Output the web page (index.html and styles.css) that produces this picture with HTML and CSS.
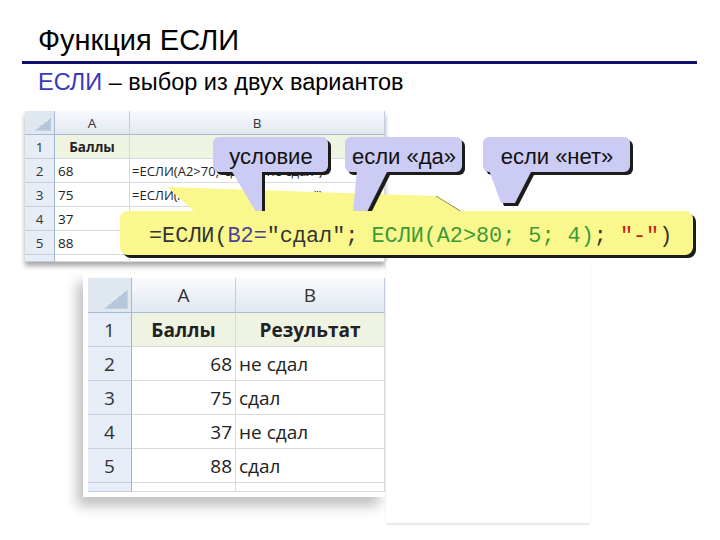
FILE: index.html
```html
<!DOCTYPE html>
<html lang="ru">
<head>
<meta charset="utf-8">
<title>Функция ЕСЛИ</title>
<link rel="stylesheet" href="styles.css">
</head>
<body>
<header class="head">
  <h1 class="title">Функция ЕСЛИ</h1>
  <div class="rule"></div>
  <p class="subtitle"><span class="kw">ЕСЛИ</span> – выбор из двух вариантов</p>
</header>
<main class="stage">
  <div class="sheet sheet-small">
    <div class="corner"></div><div class="colhead">A</div><div class="colhead">B</div>
    <div class="rownum">1</div><div class="cell hdr center">Баллы</div><div class="cell hdr"></div>
    <div class="rownum">2</div><div class="cell">68</div><div class="cell formula">=ЕСЛИ(A2&gt;70;"сдал";"не сдал")</div>
    <div class="rownum">3</div><div class="cell">75</div><div class="cell formula">=ЕСЛИ(A3&gt;70;"сдал";"не сдал")</div>
    <div class="rownum">4</div><div class="cell">37</div><div class="cell formula"></div>
    <div class="rownum">5</div><div class="cell">88</div><div class="cell formula"></div>
    <div class="rownum"></div><div class="cell"></div><div class="cell"></div>
  </div>
  <div class="frame">
    <div class="sheet sheet-big">
      <div class="corner"></div><div class="colhead">A</div><div class="colhead">B</div>
      <div class="rownum">1</div><div class="cell hdr center">Баллы</div><div class="cell hdr center">Результат</div>
      <div class="rownum">2</div><div class="cell num">68</div><div class="cell">не сдал</div>
      <div class="rownum">3</div><div class="cell num">75</div><div class="cell">сдал</div>
      <div class="rownum">4</div><div class="cell num">37</div><div class="cell">не сдал</div>
      <div class="rownum">5</div><div class="cell num">88</div><div class="cell">сдал</div>
      <div class="rownum"></div><div class="cell"></div><div class="cell"></div>
    </div>
  </div>
  <div class="cover"></div>
  <svg class="callouts" width="720" height="440" viewBox="0 100 720 440">
    <polygon class="yel" points="167,187 436,196 462,212 195,212"/>
    <line x1="436" y1="196" x2="462" y2="212" class="edge"/>
    <g class="shadow" transform="translate(3,3)">
      <rect x="213" y="137" width="115" height="35" rx="6"/>
      <polygon points="231,170 262,170 262,212 256,212"/>
      <rect x="345" y="137" width="117" height="35" rx="6"/>
      <polygon points="357,170 388,170 367,212 353,212"/>
      <rect x="483" y="137" width="147" height="35" rx="6"/>
      <polygon points="489,170 532,170 515,203 501,203"/>
    </g>
    <g class="lav">
      <rect x="213" y="137" width="115" height="35" rx="6"/>
      <polygon points="231,170 262,170 262,212 256,212"/>
      <rect x="345" y="137" width="117" height="35" rx="6"/>
      <polygon points="357,170 388,170 367,212 353,212"/>
      <rect x="483" y="137" width="147" height="35" rx="6"/>
      <polygon points="489,170 532,170 515,203 501,203"/>
    </g>
    <text class="label" x="271" y="164">условие</text>
    <text class="label" x="404" y="164">если «да»</text>
    <text class="label" x="557" y="164">если «нет»</text>
    <rect class="shadow" x="123" y="214" width="573" height="44" rx="8"/>
    <rect class="yel" x="120" y="211" width="573" height="44" rx="8"/>
    <text class="code" x="149" y="242"><tspan class="c-dark">=ЕСЛИ(</tspan><tspan class="c-blue">B2=</tspan><tspan class="c-dark">"сдал"; </tspan><tspan class="c-green">ЕСЛИ(A2&gt;80; 5; 4)</tspan><tspan class="c-dark">; </tspan><tspan class="c-red">"-"</tspan><tspan class="c-dark">)</tspan></text>
  </svg>
</main>
</body>
</html>
```
FILE: styles.css
```css
html, body {
  margin: 0;
  padding: 0;
}
body {
  width: 720px;
  height: 540px;
  overflow: hidden;
  background: #ffffff;
  font-family: "Liberation Sans", Arial, sans-serif;
  color: #000;
}
.head {
  padding-top: 24px;
}
.title {
  margin: 0 0 0 38px;
  font-size: 29px;
  font-weight: normal;
  line-height: 33px;
}
.rule {
  margin: 4px 23px 0 22px;
  height: 3px;
  background: #10106b;
}
.subtitle {
  margin: 5px 0 0 38px;
  font-size: 23.5px;
  line-height: 26px;
}
.kw {
  color: #3a3ab8;
}
.stage {
  position: relative;
  margin-top: 5px;
  padding-top: 11px;
  height: 429px;
}
.sheet {
  display: grid;
  font-family: "Open Sans", "Liberation Sans", sans-serif;
  color: #222;
  background: #fff;
}
.sheet > div {
  box-sizing: border-box;
  border-right: 1px solid #d6d9de;
  border-bottom: 1px solid #d6d9de;
  display: flex;
  align-items: center;
  overflow: hidden;
  white-space: nowrap;
}
.sheet-small {
  margin: 0 0 0 25px;
  width: 360px;
  grid-template-columns: 30px 75px 255px;
  grid-template-rows: repeat(6, 24px) 7px;
  font-size: 13.5px;
  box-shadow: 0 4px 5px rgba(0, 0, 0, 0.35);
}
.sheet-big {
  width: 297px;
  grid-template-columns: 44px 104px 149px;
  grid-template-rows: 35px repeat(5, 34px) 9px;
  font-size: 19px;
}
.frame {
  margin: 11px 0 0 83px;
  padding: 5px 0 5px 5px;
  width: 297px;
  background: #fff;
  box-shadow: -6px 9px 12px rgba(0, 0, 0, 0.25);
}
.sheet .corner {
  background: linear-gradient(to bottom right, transparent 50%, #b6c7dc 50%) right 3px bottom 3px / 55% 55% no-repeat, #dfe7f1;
  border-right-color: #a9bbd2;
  border-bottom-color: #a9bbd2;
}
.sheet .colhead {
  justify-content: center;
  background: linear-gradient(#f8fafd, #e2e8f1);
  border-right-color: #c3cedc;
  border-bottom-color: #a9bbd2;
  color: #333;
}
.sheet .rownum {
  justify-content: center;
  background: #e6edf6;
  border-right-color: #9fb4cd;
  border-bottom-color: #c3cedc;
  color: #333;
}
.sheet .cell {
  padding: 0 3px;
}
.sheet .hdr {
  background: #eef3e2;
  font-weight: bold;
}
.sheet .center {
  justify-content: center;
}
.sheet .num {
  justify-content: flex-end;
}
.sheet .formula {
  font-size: 13px;
  padding-left: 2px;
}
.cover {
  position: absolute;
  left: 386px;
  top: 162px;
  width: 204px;
  height: 261px;
  background: #fff;
  box-shadow: 0 2px 2px rgba(0, 0, 0, 0.1);
}
.callouts {
  position: absolute;
  left: 0;
  top: 0;
}
.callouts .yel {
  fill: #faf88c;
}
.callouts .edge {
  stroke: #8a8a50;
  stroke-width: 1;
}
.callouts .shadow {
  fill: #1c1c1c;
}
.callouts .lav {
  fill: #cbcbf3;
}
.callouts .label {
  font-family: "Liberation Sans", Arial, sans-serif;
  font-size: 22px;
  fill: #111;
  text-anchor: middle;
}
.callouts .code {
  font-family: "Liberation Mono", "Courier New", monospace;
  font-size: 21.8px;
  white-space: pre;
}
.c-dark { fill: #333; }
.c-blue { fill: #4b3f98; }
.c-green { fill: #3a9a3a; }
.c-red { fill: #c4200e; }
```
